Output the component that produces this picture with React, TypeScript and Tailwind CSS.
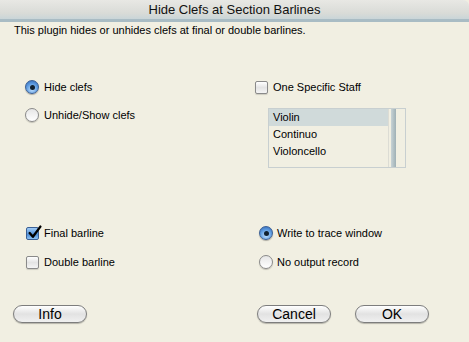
import React from 'react';

const font = { fontFamily: '"Liberation Sans", Arial, sans-serif' };

function Radio({ checked }: { checked?: boolean }) {
  if (checked) {
    return (
      <span className="flex h-[14px] w-[14px] shrink-0 items-center justify-center rounded-full border border-[#3a5f95] bg-[radial-gradient(circle_at_50%_70%,#bfe0ff_0%,#5d9be0_55%,#2f63b0_100%)] shadow-[0_1px_1px_rgba(0,0,0,0.3)]">
        <span className="h-[5px] w-[5px] rounded-full bg-[#10202f]" />
      </span>
    );
  }
  return (
    <span className="h-[14px] w-[14px] shrink-0 rounded-full border border-[#8a8a8a] bg-[linear-gradient(#e6e6e6,#ffffff)] shadow-[0_1px_1px_rgba(0,0,0,0.2)]" />
  );
}

function Check({ checked }: { checked?: boolean }) {
  if (checked) {
    return (
      <span className="relative h-[13px] w-[13px] shrink-0 rounded-[2px] border border-[#3a5f95] bg-[linear-gradient(#9fcaf5,#4f8fd9_60%,#8ec3f3)]">
        <svg viewBox="0 0 14 14" className="absolute -top-[3px] left-[0px] h-[15px] w-[15px]">
          <path d="M2.5 7.5 L5.5 11 L12.5 1.5" fill="none" stroke="#000" strokeWidth="2.2" strokeLinecap="round" strokeLinejoin="round" />
        </svg>
      </span>
    );
  }
  return (
    <span className="h-[13px] w-[13px] shrink-0 rounded-[2px] border border-[#8a8a8a] bg-[linear-gradient(#ffffff,#e4e4e4_50%,#f4f4f4)] shadow-[0_1px_1px_rgba(0,0,0,0.15)]" />
  );
}

function Button({ label }: { label: string }) {
  return (
    <button className="flex h-[18px] w-[74px] items-center justify-center rounded-full border border-[#7d7d7d] bg-[linear-gradient(#ffffff,#e2e2e2_50%,#f0f0f0)] text-[14px] leading-none text-black shadow-[0_1px_1px_rgba(0,0,0,0.25)]">
      {label}
    </button>
  );
}

export default function App() {
  return (
    <div className="h-[342px] w-[469px] overflow-hidden bg-[#f1efe2] text-[11px] text-black" style={font}>
      <div className="flex h-[22px] items-center justify-center rounded-tr-[6px] border-b-[3px] border-[#a9bcc4] bg-[linear-gradient(#e8e8e4,#d9dbd7_70%,#c9d5d8)]">
        <span className="text-[13px] text-[#111]">Hide Clefs at Section Barlines</span>
      </div>

      <p className="ml-[14px] mt-[1px] leading-[14px]">This plugin hides or unhides clefs at final or double barlines.</p>

      <div className="mt-[43px] flex">
        <div className="ml-[25px] flex w-[230px] flex-col gap-[14px]">
          <label className="flex h-[14px] items-center gap-[5px]">
            <Radio checked />
            <span>Hide clefs</span>
          </label>
          <label className="flex h-[14px] items-center gap-[5px]">
            <Radio />
            <span>Unhide/Show clefs</span>
          </label>
        </div>
        <div className="flex flex-col">
          <label className="flex h-[14px] items-center gap-[5px]">
            <Check />
            <span>One Specific Staff</span>
          </label>
          <div className="ml-[13px] mt-[14px] flex h-[60px] w-[138px] border border-[#c8cfd0] bg-[#f1efe2]">
            <div className="flex flex-1 flex-col">
              <div className="flex h-[17px] items-center bg-[#d0dada] pl-[4px]">Violin</div>
              <div className="flex h-[17px] items-center pl-[4px]">Continuo</div>
              <div className="flex h-[17px] items-center pl-[4px]">Violoncello</div>
            </div>
            <div className="w-[17px] border-l border-[#dcdcd4] pl-[2px]">
              <div className="h-full w-[5px] bg-[linear-gradient(90deg,#c8d3d6,#9fb0b5)]" />
            </div>
          </div>
        </div>
      </div>

      <div className="mt-[58px] flex">
        <div className="ml-[26px] flex w-[233px] flex-col gap-[15px]">
          <label className="flex h-[14px] items-center gap-[5px]">
            <Check checked />
            <span>Final barline</span>
          </label>
          <label className="flex h-[14px] items-center gap-[5px]">
            <Check />
            <span>Double barline</span>
          </label>
        </div>
        <div className="flex flex-col gap-[15px]">
          <label className="flex h-[14px] items-center gap-[4px]">
            <Radio checked />
            <span>Write to trace window</span>
          </label>
          <label className="flex h-[14px] items-center gap-[4px]">
            <Radio />
            <span>No output record</span>
          </label>
        </div>
      </div>

      <div className="mt-[36px] flex">
        <div className="ml-[13px] w-[244px]">
          <Button label="Info" />
        </div>
        <div className="flex gap-[24px]">
          <Button label="Cancel" />
          <Button label="OK" />
        </div>
      </div>
    </div>
  );
}
